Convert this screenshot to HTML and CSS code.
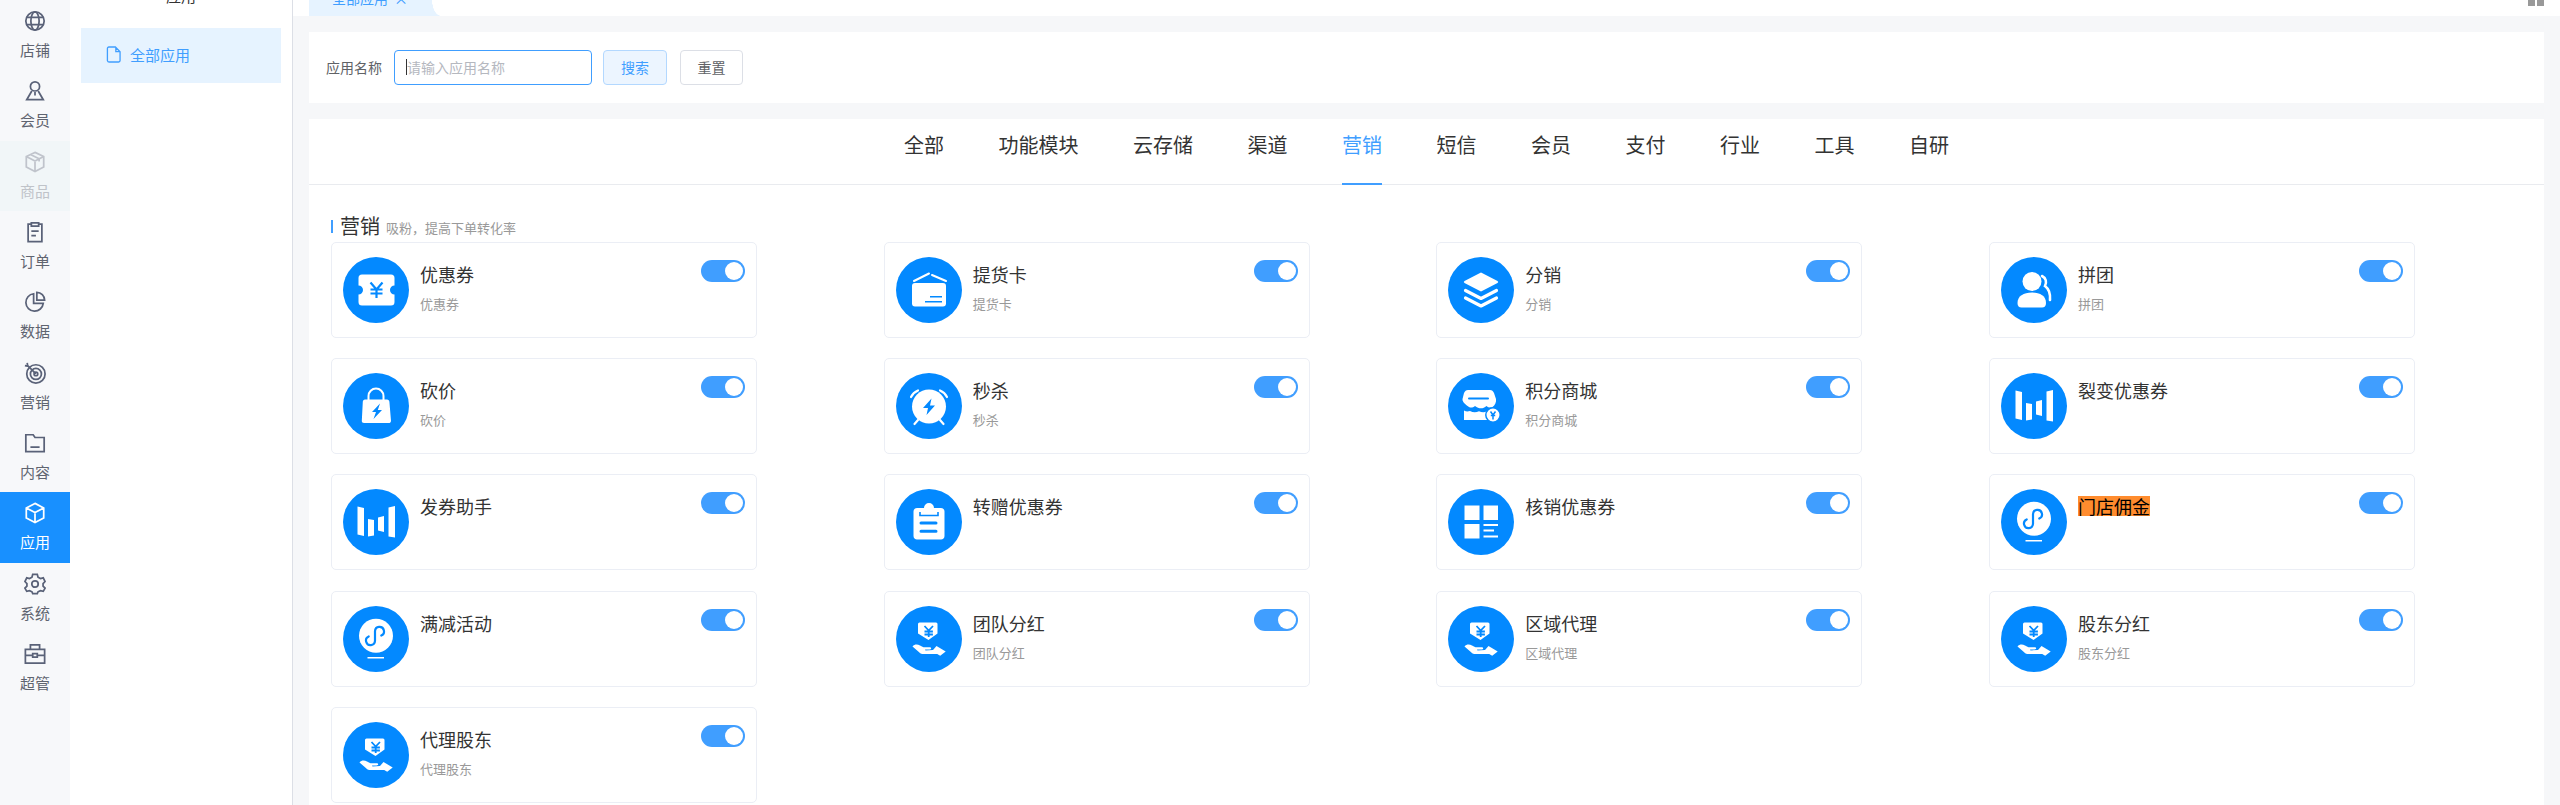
FILE: index.html
```html
<!DOCTYPE html>
<html lang="zh-CN">
<head>
    <meta charset="UTF-8">
    <title>全部应用</title>
    <link rel="stylesheet" href="styles.css">
</head>
<body>
    <!-- shared icons for the round card badges -->
    <svg class="defs" width="0" height="0">
        <symbol id="i-coupon" viewBox="0 0 66 66">
            <path fill="#fff" d="M19 17.500h29a3.500 3.500 0 0 1 3.500 3.500v7.500a4.500 4.500 0 0 0 0 9v7.500a3.500 3.500 0 0 1-3.500 3.500H19a3.500 3.500 0 0 1-3.500-3.500V37.500a4.500 4.500 0 0 0 0-9V21a3.500 3.500 0 0 1 3.500-3.500z"/>
            <path fill="none" stroke="#0389ff" stroke-width="2.200" d="M27.500 25.500l6 7 6-7M33.500 32.500V41M27.500 32.500h12M27.500 36.500h12"/>
        </symbol>
        <symbol id="i-card" viewBox="0 0 66 66">
            <path fill="#fff" d="M19 26h28a3 3 0 0 1 3 3v17.500a3 3 0 0 1-3 3H19a3 3 0 0 1-3-3V29a3 3 0 0 1 3-3z"/>
            <path fill="none" stroke="#fff" stroke-width="2" stroke-linecap="round" d="M18 24l15-7.500M36 18l14 6"/>
            <path fill="none" stroke="#0389ff" stroke-width="1.600" d="M34 39.700h12M29 44.700h17"/>
        </symbol>
        <symbol id="i-layers" viewBox="0 0 66 66">
            <path fill="#fff" d="M33 15.500l16.500 8.500a1.200 1.200 0 0 1 0 2L33 34.500 16.500 26a1.200 1.200 0 0 1 0-2z"/>
            <path fill="none" stroke="#fff" stroke-width="3.200" stroke-linecap="round" stroke-linejoin="round" d="M17.500 33.500L33 41.500l15.500-8M17.500 41L33 49l15.500-8"/>
        </symbol>
        <symbol id="i-group" viewBox="0 0 66 66">
            <circle cx="31" cy="24.500" r="9.500" fill="#fff"/>
            <path fill="#fff" d="M16.500 46c0-7 6-10.500 14.500-10.500S45 39 45 46c0 3-1.500 4.500-4 4.500H20.500c-2.500 0-4-1.500-4-4.500z"/>
            <path fill="none" stroke="#fff" stroke-width="2.600" stroke-linecap="round" d="M41 19c4 2 5 6 3 10 4 3 5.500 8 5 14"/>
        </symbol>
        <symbol id="i-bag" viewBox="0 0 66 66">
            <path fill="none" stroke="#fff" stroke-width="2" d="M25.500 29v-6a7.500 7.500 0 0 1 15 0v6"/>
            <path fill="#fff" d="M22 26.500h22c1.500 0 2.200 1 2.400 2.200l1.600 19c0 1.400-1 2.300-2.200 2.300H21c-1.300 0-2.300-1-2.200-2.300l1-19c.1-1.200 1-2.200 2.200-2.200z"/>
            <path fill="#0389ff" d="M37 30.500l-8 8.500h4l-2.500 7 8.500-9h-4.200z"/>
        </symbol>
        <symbol id="i-clock" viewBox="0 0 66 66">
            <circle cx="33" cy="33.500" r="17" fill="#fff"/>
            <path fill="none" stroke="#fff" stroke-width="2.200" stroke-linecap="round" d="M15 24c1.500-3 3.500-5 7-6.500M44 17.500c3.500 1.500 5.500 3.500 7 6.500M22 47l-3.500 4M44 47l3.500 4"/>
            <path fill="#0389ff" d="M35.500 25.500L27 35h5l-1.500 7 8.500-9.500h-5z"/>
        </symbol>
        <symbol id="i-shop" viewBox="0 0 66 66">
            <path fill="#fff" d="M20 17h22c2 0 3 1 4 3l2 6c.5 3-1 6.500-3.500 8-2 1.200-4 .5-6-1-2 1.800-3.500 2.300-5.500 2.300S29 34.800 27 33c-2 1.500-4 2.200-6 1-2.500-1.500-7-5-6.500-8l1.500-6c1-2 2-3 4-3z"/>
            <path fill="#fff" d="M16 37.500c2 1.200 4 1.200 6 .5 3 1.500 6 1.500 9 .3 3 1.200 6 1.200 8-.3v9H16z"/>
            <path fill="none" stroke="#0389ff" stroke-width="2" stroke-linecap="round" d="M21 25.500h19"/>
            <circle cx="45" cy="42" r="7.200" fill="#fff" stroke="#0389ff" stroke-width="1.500"/>
            <path fill="none" stroke="#0389ff" stroke-width="1.500" d="M42.500 38.500l2.500 3.500 2.500-3.500M45 42v4.500M42.800 42.500h4.400"/>
        </symbol>
        <symbol id="i-bars" viewBox="0 0 66 66">
            <path fill="#fff" d="M14.500 17.500l6.500 1.500v28l-6.500-1.500zM25 30l6 1v15.500l-6 1zM35 28.500l6-1.500v16l-6-1.500zM45.500 18.500l6.500-1.500v31.500l-6.500-1z"/>
        </symbol>
        <symbol id="i-clipboard" viewBox="0 0 66 66">
            <path fill="#fff" d="M21 19h5v3h14v-3h5c2 0 3.500 1.500 3.500 3.500V47c0 2-1.500 3.500-3.500 3.500H21c-2 0-3.500-1.500-3.500-3.500V22.500C17.500 20.500 19 19 21 19z"/>
            <path fill="#fff" d="M28 19a5 5 0 0 1 10 0h2v3H26v-3z"/>
            <path fill="none" stroke="#0389ff" stroke-width="1.600" d="M24 23v3.500h18V23"/>
            <path fill="none" stroke="#0389ff" stroke-width="3" stroke-linecap="round" d="M25 34h15M25 42.300h15"/>
        </symbol>
        <symbol id="i-grid" viewBox="0 0 66 66">
            <path fill="#fff" d="M16.500 16.500h15v14.500h-15zM35.500 16.500H50v14.500H35.500zM16.500 35h15v14.500h-15z"/>
            <path fill="none" stroke="#fff" stroke-width="1.800" d="M35.500 36H50M35.500 41.500H46M35.500 47.500H50"/>
        </symbol>
        <symbol id="i-mini" viewBox="0 0 66 66">
            <circle cx="33" cy="29.700" r="17" fill="#fff"/>
            <path fill="none" stroke="#0389ff" stroke-width="2.200" stroke-linecap="round" d="M25.700 30.500a4.500 4.500 0 1 0 6.300 4.300v-9.600a4.500 4.500 0 1 1 6.300 4.300"/>
            <path fill="none" stroke="#fff" stroke-width="1.600" d="M24.500 51.700H41"/>
        </symbol>
        <symbol id="i-hand" viewBox="0 0 66 66">
            <path fill="#fff" d="M23.500 16.500h16.500a1.500 1.500 0 0 1 1.500 1.500v9.500l-9 6.500-10.500-6.500V18a1.500 1.500 0 0 1 1.500-1.500z"/>
            <path fill="none" stroke="#0389ff" stroke-width="1.800" d="M28.500 20l4.200 4.500 4.300-4.500M32.700 24.500V31M28.500 25.500h8.400M28.500 28.500h8.400"/>
            <path fill="#fff" d="M16.500 40.500c2-2.500 5-2.500 7.500-1l3.500 1.700h6c2 0 2.500 2 0 2.400h-4.500l.5.800 7.500-.4 3.500-4 9.200 5.500-5.500 4.200-3-1.700H28c-3 0-4-.8-6-2.800z"/>
        </symbol>
    </svg>

    <div class="app">
        <!-- main nav -->
        <nav class="sidebar">
            <a class="nav-item">
                <svg class="nav-icon" viewBox="0 0 24 24"><circle cx="12" cy="12" r="10"/><ellipse cx="12" cy="12" rx="4.500" ry="10"/><path d="M3 8h18M3 16h18"/></svg>
                <span>店铺</span>
            </a>
            <a class="nav-item">
                <svg class="nav-icon" viewBox="0 0 24 24"><circle cx="12" cy="7" r="5"/><path d="M8.500 12L3 21.500h18L15.500 12M12 13v4"/></svg>
                <span>会员</span>
            </a>
            <a class="nav-item disabled">
                <svg class="nav-icon" viewBox="0 0 24 24"><path d="M12 1.500l9.500 4.500v11.500L12 22.500l-9.500-5V6zM2.500 6L12 11l9.500-5M12 11v11.500M7 3.800L16.500 8.500v3"/></svg>
                <span>商品</span>
            </a>
            <a class="nav-item">
                <svg class="nav-icon" viewBox="0 0 24 24"><path d="M8 3.500H4.500v19h15v-19H16M8 2h8v3.500H8zM8 11h8M8 16h5"/></svg>
                <span>订单</span>
            </a>
            <a class="nav-item">
                <svg class="nav-icon" viewBox="0 0 24 24"><path d="M10.500 3a9.500 9.500 0 1 0 10.500 10.500H10.500zM14 1.500v8.500h8.500A8.500 8.500 0 0 0 14 1.500z"/></svg>
                <span>数据</span>
            </a>
            <a class="nav-item">
                <svg class="nav-icon" viewBox="0 0 24 24"><circle cx="13" cy="13" r="10"/><circle cx="13" cy="13" r="6"/><circle cx="13" cy="13" r="2"/><path d="M13 13L3.500 3.500M1 4l3 .5L3.500 1"/></svg>
                <span>营销</span>
            </a>
            <a class="nav-item">
                <svg class="nav-icon" viewBox="0 0 24 24"><path d="M2 3h8l2 3h10v15.500H2zM12 6h7.500M7 16.500h10"/></svg>
                <span>内容</span>
            </a>
            <a class="nav-item active">
                <svg class="nav-icon" viewBox="0 0 24 24"><path d="M12 1.500l9.500 5v11L12 22.500l-9.500-5v-11zM2.500 6.500L12 11.500l9.500-5M12 11.500v11"/></svg>
                <span>应用</span>
            </a>
            <a class="nav-item">
                <svg class="nav-icon" viewBox="0 0 24 24"><path d="M9.500 2h5l.8 3 2.700 1.600 3-.8 2 4-2.200 2.200v2.800l2.200 2.200-2 3.500-3-.8L15.300 21l-.8 2h-5l-.8-2-2.700-1.300-3 .8-2-3.500L3.200 14.800V12L1 9.800l2-4 3 .8L8.700 5z" transform="translate(0 -.5)"/><circle cx="12" cy="12" r="3.500"/></svg>
                <span>系统</span>
            </a>
            <a class="nav-item">
                <svg class="nav-icon" viewBox="0 0 24 24"><path d="M1.500 7h21v15h-21zM7 7V2h10v5M1.500 13.500h8M14.500 13.500h8M9.500 11.500h5v4h-5z"/></svg>
                <span>超管</span>
            </a>
        </nav>

        <!-- sub nav -->
        <aside class="subnav">
            <div class="subnav-title">应用</div>
            <a class="subnav-item">
                <svg class="subnav-icon" viewBox="0 0 16 18"><path d="M3 1h7l5 5v9.500a1.500 1.500 0 0 1-1.500 1.500h-10A2 2 0 0 1 1.500 15.500V2.500A1.500 1.500 0 0 1 3 1zM10.500 1v5H15"/></svg>
                <span>全部应用</span>
            </a>
        </aside>

        <main class="main">
            <div class="tab-bar">
                <div class="page-tab"><span>全部应用</span><span class="page-tab-close">×</span></div>
                <div class="layout-btn"><i></i><i></i></div>
            </div>

            <form class="filter-card">
                <label class="filter-label">应用名称</label>
                <div class="filter-input"><span class="caret"></span>请输入应用名称</div>
                <button type="button" class="btn btn-search">搜索</button>
                <button type="button" class="btn btn-reset">重置</button>
            </form>

            <section class="apps-card">
                <div class="cat-tabs">
                    <a>全部</a>
                    <a>功能模块</a>
                    <a>云存储</a>
                    <a>渠道</a>
                    <a class="active">营销</a>
                    <a>短信</a>
                    <a>会员</a>
                    <a>支付</a>
                    <a>行业</a>
                    <a>工具</a>
                    <a>自研</a>
                </div>

                <div class="apps-body">
                    <h3 class="group-title"><i class="group-bar"></i>营销<small>吸粉，提高下单转化率</small></h3>
                    <div class="app-grid">
                        <div class="app-card">
                            <svg class="app-icon"><use href="#i-coupon"/></svg>
                            <div class="app-text"><div class="app-name">优惠券</div><div class="app-desc">优惠券</div></div>
                            <span class="switch"></span>
                        </div>
                        <div class="app-card">
                            <svg class="app-icon"><use href="#i-card"/></svg>
                            <div class="app-text"><div class="app-name">提货卡</div><div class="app-desc">提货卡</div></div>
                            <span class="switch"></span>
                        </div>
                        <div class="app-card">
                            <svg class="app-icon"><use href="#i-layers"/></svg>
                            <div class="app-text"><div class="app-name">分销</div><div class="app-desc">分销</div></div>
                            <span class="switch"></span>
                        </div>
                        <div class="app-card">
                            <svg class="app-icon"><use href="#i-group"/></svg>
                            <div class="app-text"><div class="app-name">拼团</div><div class="app-desc">拼团</div></div>
                            <span class="switch"></span>
                        </div>
                        <div class="app-card">
                            <svg class="app-icon"><use href="#i-bag"/></svg>
                            <div class="app-text"><div class="app-name">砍价</div><div class="app-desc">砍价</div></div>
                            <span class="switch"></span>
                        </div>
                        <div class="app-card">
                            <svg class="app-icon"><use href="#i-clock"/></svg>
                            <div class="app-text"><div class="app-name">秒杀</div><div class="app-desc">秒杀</div></div>
                            <span class="switch"></span>
                        </div>
                        <div class="app-card">
                            <svg class="app-icon"><use href="#i-shop"/></svg>
                            <div class="app-text"><div class="app-name">积分商城</div><div class="app-desc">积分商城</div></div>
                            <span class="switch"></span>
                        </div>
                        <div class="app-card">
                            <svg class="app-icon"><use href="#i-bars"/></svg>
                            <div class="app-text"><div class="app-name">裂变优惠券</div></div>
                            <span class="switch"></span>
                        </div>
                        <div class="app-card">
                            <svg class="app-icon"><use href="#i-bars"/></svg>
                            <div class="app-text"><div class="app-name">发券助手</div></div>
                            <span class="switch"></span>
                        </div>
                        <div class="app-card">
                            <svg class="app-icon"><use href="#i-clipboard"/></svg>
                            <div class="app-text"><div class="app-name">转赠优惠券</div></div>
                            <span class="switch"></span>
                        </div>
                        <div class="app-card">
                            <svg class="app-icon"><use href="#i-grid"/></svg>
                            <div class="app-text"><div class="app-name">核销优惠券</div></div>
                            <span class="switch"></span>
                        </div>
                        <div class="app-card">
                            <svg class="app-icon"><use href="#i-mini"/></svg>
                            <div class="app-text"><div class="app-name"><span class="mark">门店佣金</span></div></div>
                            <span class="switch"></span>
                        </div>
                        <div class="app-card">
                            <svg class="app-icon"><use href="#i-mini"/></svg>
                            <div class="app-text"><div class="app-name">满减活动</div></div>
                            <span class="switch"></span>
                        </div>
                        <div class="app-card">
                            <svg class="app-icon"><use href="#i-hand"/></svg>
                            <div class="app-text"><div class="app-name">团队分红</div><div class="app-desc">团队分红</div></div>
                            <span class="switch"></span>
                        </div>
                        <div class="app-card">
                            <svg class="app-icon"><use href="#i-hand"/></svg>
                            <div class="app-text"><div class="app-name">区域代理</div><div class="app-desc">区域代理</div></div>
                            <span class="switch"></span>
                        </div>
                        <div class="app-card">
                            <svg class="app-icon"><use href="#i-hand"/></svg>
                            <div class="app-text"><div class="app-name">股东分红</div><div class="app-desc">股东分红</div></div>
                            <span class="switch"></span>
                        </div>
                        <div class="app-card">
                            <svg class="app-icon"><use href="#i-hand"/></svg>
                            <div class="app-text"><div class="app-name">代理股东</div><div class="app-desc">代理股东</div></div>
                            <span class="switch"></span>
                        </div>
                    </div>
                </div>
            </section>
        </main>
    </div>
</body>
</html>
```

FILE: styles.css
```css
* {
    box-sizing: border-box;
}
html, body {
    margin: 0;
    height: 100%;
    overflow: hidden;
}
body {
    font-family: "Noto Sans CJK SC", "Liberation Sans", sans-serif;
    color: #333;
    background-color: #f6f7f9;
}
a {
    text-decoration: none;
}
.defs {
    position: absolute;
}
.app {
    display: flex;
    height: 805px;
}

/* main nav */
.sidebar {
    width: 70px;
    flex: none;
    background-color: #f7f8fa;
}
.nav-item {
    display: flex;
    flex-direction: column;
    align-items: center;
    height: 70.33px;
    padding-top: 10px;
    font-size: 15px;
    line-height: 20px;
    color: #5f6470;
}
.nav-icon {
    width: 22px;
    height: 22px;
    margin-bottom: 8px;
    fill: none;
    stroke: #5a6278;
    stroke-width: 1.9;
}
.nav-item.disabled {
    background-color: #f1f6f8;
    color: #bfc3c9;
}
.nav-item.disabled .nav-icon {
    stroke: #c0c4cc;
}
.nav-item.active {
    background-color: #1890ff;
    color: #fff;
}
.nav-item.active .nav-icon {
    stroke: #fff;
}

/* sub nav */
.subnav {
    width: 223px;
    flex: none;
    overflow: hidden;
    padding: 0 11px;
    background-color: #fff;
    border-right: 1px solid #dcdfe6;
}
.subnav-title {
    height: 16px;
    margin: -12px 0 24px;
    font-size: 15px;
    line-height: 16px;
    text-align: center;
}
.subnav-item {
    display: flex;
    align-items: center;
    height: 55px;
    padding: 0 0 2px 25px;
    font-size: 15px;
    color: #409eff;
    background-color: #e6f3ff;
}
.subnav-icon {
    width: 15px;
    height: 17px;
    margin-right: 9px;
    fill: none;
    stroke: #409eff;
    stroke-width: 1.4;
}

/* right side */
.main {
    flex: 1;
    min-width: 0;
    padding: 0 16px;
}
.tab-bar {
    display: flex;
    justify-content: space-between;
    height: 16px;
    margin: 0 -16px;
    padding: 0 16px;
    background-color: #fff;
}
.page-tab {
    position: relative;
    display: flex;
    width: 123px;
    height: 16px;
    padding-left: 23px;
    font-size: 14px;
    line-height: 14px;
    color: #409eff;
    background-color: #e6f3ff;
}
.page-tab span:first-child {
    margin-top: -9px;
    height: 14px;
}
.page-tab-close {
    margin: -9px 0 0 6px;
}
.page-tab::after {
    content: "";
    position: absolute;
    left: 100%;
    top: 0;
    width: 9px;
    height: 16px;
    background: radial-gradient(ellipse 9px 16px at 100% 0, transparent 97%, #e6f3ff 100%);
}
.layout-btn {
    display: flex;
    gap: 2px;
}
.layout-btn i {
    width: 7px;
    height: 6px;
    background-color: #999;
}
.filter-card {
    display: flex;
    align-items: center;
    height: 71px;
    margin: 16px 0;
    padding-left: 17px;
    background-color: #fff;
}
.filter-label {
    margin-right: 12px;
    padding-bottom: 2px;
    font-size: 14px;
    color: #606266;
}
.filter-input {
    display: flex;
    align-items: center;
    width: 198px;
    height: 35px;
    margin-right: 11px;
    padding: 0 0 2px 11px;
    font-size: 14px;
    color: #b5b8bf;
    border: 1px solid #409eff;
    border-radius: 4px;
}
.caret {
    width: 1px;
    height: 16px;
    background-color: #333;
}
.btn {
    height: 35px;
    padding: 0 0 2px;
    font-family: inherit;
    font-size: 14px;
    border-radius: 4px;
}
.btn-search {
    width: 64px;
    margin-right: 13px;
    color: #409eff;
    background-color: #ecf5ff;
    border: 1px solid #b3d8ff;
}
.btn-reset {
    width: 63px;
    color: #606266;
    background-color: #fff;
    border: 1px solid #dcdfe6;
}
.apps-card {
    height: 686px;
    overflow: hidden;
    background-color: #fff;
}
.cat-tabs {
    display: flex;
    justify-content: center;
    gap: 54.5px;
    height: 66px;
    border-bottom: 1px solid #e9ebef;
}
.cat-tabs a {
    height: 66px;
    font-size: 20px;
    line-height: 52px;
    color: #333;
}
.cat-tabs a.active {
    color: #409eff;
    border-bottom: 2px solid #409eff;
}
.apps-body {
    padding: 31px 0 0 22px;
}
.group-title {
    display: flex;
    align-items: center;
    height: 20px;
    margin: 0 0 6px;
    font-size: 20px;
    font-weight: normal;
    line-height: 20px;
}
.group-bar {
    width: 2px;
    height: 13px;
    margin-right: 7px;
    background-color: #409eff;
}
.group-title small {
    margin: 3px 0 0 6px;
    font-size: 13px;
    color: #999;
}
.app-grid {
    display: grid;
    grid-template-columns: repeat(4, 552.67px);
    row-gap: 20.2px;
}
.app-card {
    display: flex;
    width: 426px;
    height: 96px;
    padding: 14px 11px 0;
    background-color: #fff;
    border: 1px solid #ebeef5;
    border-radius: 5px;
}
.app-icon {
    width: 66px;
    height: 66px;
    flex: none;
    margin-right: 11px;
    background-color: #0389ff;
    border-radius: 50%;
}
.app-text {
    flex: 1;
    padding-top: 7px;
}
.app-name {
    font-size: 18px;
    line-height: 20px;
    color: #333;
}
.app-desc {
    margin-top: 10px;
    font-size: 13px;
    line-height: 20px;
    color: #999;
}
.mark {
    display: inline-block;
    color: #000;
    background-color: #ff8c2e;
}
.switch {
    display: flex;
    justify-content: flex-end;
    align-items: center;
    width: 44px;
    height: 22px;
    margin-top: 3px;
    padding-right: 2px;
    background-color: #409eff;
    border-radius: 11px;
}
.switch::after {
    content: "";
    width: 18px;
    height: 18px;
    background-color: #fff;
    border-radius: 50%;
}
```
